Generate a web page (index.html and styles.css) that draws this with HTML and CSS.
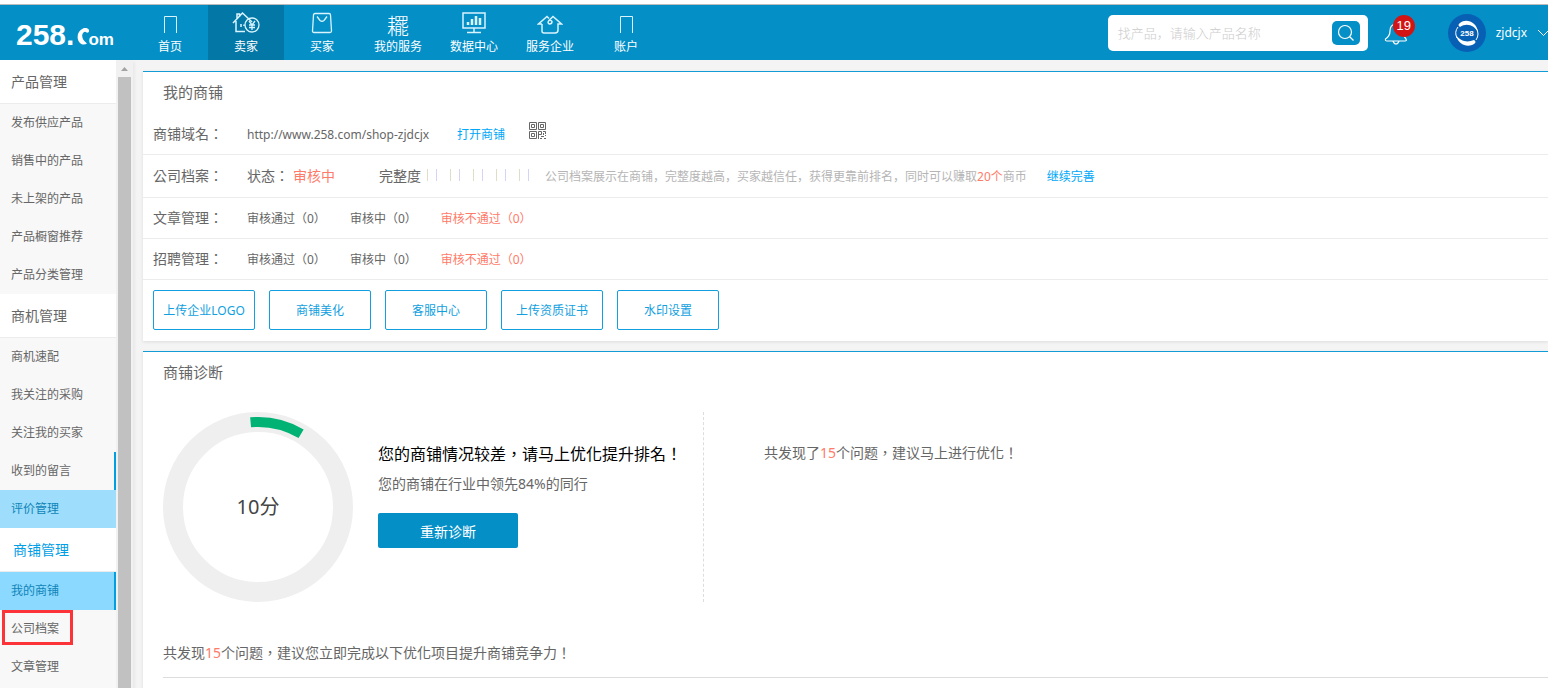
FILE: index.html
```html
<!DOCTYPE html>
<html lang="zh-CN">
<head>
  <meta charset="utf-8">
  <title>我的商铺</title>
  <link rel="stylesheet" href="styles.css">
</head>
<body>
  <header class="header">
    <a class="logo" href="#">
      <span class="logo-num">258.</span>
      <svg class="logo-c" width="13" height="17" viewBox="0 0 13 17">
        <path d="M6 0.500C8 -0.500 11 0 12 2C12.500 4 11 5 9.500 4.500C8.500 3.500 7.500 3.500 6.500 4.500C4 7 5 12 10 15.500C8 17 5 17 3 15C-1 11 0 3 6 0.500Z" fill="#fff"/>
      </svg>
      <span class="logo-om">om</span>
    </a>

    <nav class="nav">
      <a class="nav-item" href="#">
        <svg class="nav-icon" width="26" height="26" viewBox="0 0 26 26"><path d="M7.500 22V5.500H19.500V22"/></svg>
        <span>首页</span>
      </a>
      <a class="nav-item active" href="#">
        <svg class="nav-icon" width="28" height="26" viewBox="0 0 28 26">
          <path d="M1 12L10.500 2L20 11M4 10V20.500H13M5 8V3H7.500V6M9 13V16M12 13.500V15" stroke-width="1.500"/>
          <circle cx="20" cy="14" r="7" stroke-width="1.300"/>
          <path d="M17 10L20 14L23 10M20 14V19M17 14H23M17 16.500H23" stroke-width="1.300"/>
        </svg>
        <span>卖家</span>
      </a>
      <a class="nav-item" href="#">
        <svg class="nav-icon" width="26" height="26" viewBox="0 0 26 26">
          <path d="M6 2.500H20Q21.500 2.500 21.500 4L22.500 20Q22.500 21.500 21 21.500H5Q3.500 21.500 3.500 20L4.500 4Q4.500 2.500 6 2.500ZM8 5.500L11 9.500Q13 11 15 9.500L18 5.500" stroke-width="1.300"/>
        </svg>
        <span>买家</span>
      </a>
      <a class="nav-item" href="#">
        <span class="nav-glyph">䎱</span>
        <span>我的服务</span>
      </a>
      <a class="nav-item" href="#">
        <svg class="nav-icon" width="26" height="26" viewBox="0 0 26 26">
          <path d="M2 2H24V17H2ZM13 17V21M6 21.500H20" stroke-width="1.500"/>
          <path d="M7 14V11M11 14V8M15 14V5M19 14V7" stroke-width="2.500"/>
        </svg>
        <span>数据中心</span>
      </a>
      <a class="nav-item" href="#">
        <svg class="nav-icon" width="26" height="26" viewBox="0 0 26 26">
          <path d="M5 13H1.500L10 5.500L12 7.500M5 13V20Q5 22 7 22H18Q21 22 21 19V13H24.500L16 5.500L12 9.500Q10 12 12.500 13Q15 13 15 10.500L13 8.500" stroke-width="1.500"/>
        </svg>
        <span>服务企业</span>
      </a>
      <a class="nav-item" href="#">
        <svg class="nav-icon" width="26" height="26" viewBox="0 0 26 26"><path d="M7.500 22V5.500H19.500V22"/></svg>
        <span>账户</span>
      </a>
    </nav>

    <form class="search">
      <input class="search-input" type="text" aria-label="找产品" placeholder="找产品，请输入产品名称">
      <button class="search-button" type="button" aria-label="搜索">
        <svg width="18" height="18" viewBox="0 0 18 18" fill="none" stroke="#fff" stroke-width="1.200">
          <circle cx="8" cy="8" r="6.500"/><path d="M12.500 12.500L16.500 16.500"/>
        </svg>
      </button>
    </form>

    <a class="bell" href="#" aria-label="消息">
      <svg width="24" height="24" viewBox="0 0 24 24" fill="none" stroke="#fff" stroke-width="1.200">
        <path d="M11 3Q6 4 6 10Q6 15 1.500 18Q1 20 3 20H21Q23 20 22 18Q19 15 18 10Q18 4 13 3M9 20Q10 23 12 23T15 20"/>
      </svg>
      <span class="badge">19</span>
    </a>

    <a class="user" href="#">
      <svg width="38" height="38" viewBox="0 0 38 38">
        <circle cx="19" cy="19" r="19" fill="#0860b4"/>
        <path d="M12 9C18 4 29 8 30 18C27 12 19 8 12 13C10 12 10 10 12 9Z" fill="#fff"/>
        <path d="M26 30C20 34 10 31 8 21C12 27 19 29 26 26C28 27 28 29 26 30Z" fill="#fff"/>
        <path d="M10 13Q6 18 9 24M28 14Q32 20 28 26" fill="none" stroke="#fff"/>
        <text class="avatar-text" x="19" y="22" text-anchor="middle">258</text>
      </svg>
      <span class="user-name">zjdcjx</span>
      <svg class="chevron" width="11" height="10" viewBox="0 0 11 10" fill="none" stroke="#fff"><path d="M1 2L6.500 7.500L12 2"/></svg>
    </a>
  </header>

  <div class="page">
    <aside class="sidebar">
      <h2 class="menu-title">产品管理</h2>
      <ul class="menu">
        <li><a href="#">发布供应产品</a></li>
        <li><a href="#">销售中的产品</a></li>
        <li><a href="#">未上架的产品</a></li>
        <li><a href="#">产品橱窗推荐</a></li>
        <li><a href="#">产品分类管理</a></li>
      </ul>
      <h2 class="menu-title">商机管理</h2>
      <ul class="menu">
        <li><a href="#">商机速配</a></li>
        <li><a href="#">我关注的采购</a></li>
        <li><a href="#">关注我的买家</a></li>
        <li><a class="marked" href="#">收到的留言</a></li>
        <li><a class="hover" href="#">评价管理</a></li>
      </ul>
      <h2 class="menu-title current">商铺管理</h2>
      <ul class="menu">
        <li><a class="marked selected" href="#">我的商铺</a></li>
        <li class="framed"><a href="#">公司档案</a></li>
        <li><a href="#">文章管理</a></li>
      </ul>
    </aside>
    <div class="scrollbar">
      <svg width="13" height="17" viewBox="0 0 13 17"><path d="M3 11H10L6.500 7Z" fill="#a3a3a3"/></svg>
      <div class="thumb"></div>
    </div>

    <main class="main">
      <section class="panel">
        <h1 class="panel-title">我的商铺</h1>
        <div class="row">
          <span class="label">商铺域名：</span>
          <span class="domain">http://www.258.com/shop-zjdcjx</span>
          <a class="link" href="#">打开商铺</a>
          <svg class="qr" width="17" height="17" viewBox="0 0 17 17" fill="none" stroke="#666">
            <path d="M.500 .500H7.500V7.500H.500ZM9.500 .500H16.500V7.500H9.500ZM.500 9.500H7.500V16.500H.500ZM2.500 2.500H5.500V5.500H2.500ZM11.500 2.500H14.500V5.500H11.500ZM2.500 11.500H5.500V14.500H2.500ZM9.500 17V9.500H12.500V12.500H10M14 9.500H16.500V12M16.500 13V14M12 14.500H15M11 16.500H13M15 16.500H17M14.500 11V13"/>
          </svg>
        </div>
        <div class="row row-tall">
          <span class="label">公司档案：</span>
          <span class="status"><span class="label-text">状态：</span><span class="warn">审核中</span></span>
          <span class="complete">完整度</span>
          <span class="stars"><i></i><i></i><i></i><i></i><i></i></span>
          <span class="tip">公司档案展示在商铺，完整度越高，买家越信任，获得更靠前排名，同时可以赚取<span class="warn">20个</span>商币</span>
          <a class="link" href="#">继续完善</a>
        </div>
        <div class="row">
          <span class="label">文章管理：</span>
          <span class="counts"><a href="#">审核通过（0）</a><a href="#">审核中（0）</a><a class="warn" href="#">审核不通过（0）</a></span>
        </div>
        <div class="row">
          <span class="label">招聘管理：</span>
          <span class="counts"><a href="#">审核通过（0）</a><a href="#">审核中（0）</a><a class="warn" href="#">审核不通过（0）</a></span>
        </div>
        <div class="actions">
          <button type="button">上传企业LOGO</button>
          <button type="button">商铺美化</button>
          <button type="button">客服中心</button>
          <button type="button">上传资质证书</button>
          <button type="button">水印设置</button>
        </div>
      </section>

      <section class="panel diagnosis-panel">
        <h1 class="panel-title">商铺诊断</h1>
        <div class="diagnosis">
          <svg class="gauge" width="190" height="190" viewBox="0 0 190 190">
            <circle cx="95" cy="95" r="85" fill="none" stroke="#efefef" stroke-width="20"/>
            <path d="M87.600 10.300A85 85 0 0 1 138.100 21.700" fill="none" stroke="#00b274" stroke-width="10"/>
            <text class="gauge-text" x="95" y="102" text-anchor="middle">10分</text>
          </svg>
          <div class="result">
            <p class="result-title">您的商铺情况较差，请马上优化提升排名！</p>
            <p class="result-text">您的商铺在行业中领先84%的同行</p>
            <button class="retry" type="button">重新诊断</button>
          </div>
          <p class="problems">共发现了<span class="warn">15</span>个问题，建议马上进行优化！</p>
        </div>
        <p class="summary">共发现<span class="warn">15</span>个问题，建议您立即完成以下优化项目提升商铺竞争力！</p>
      </section>
    </main>
  </div>
</body>
</html>
```
FILE: styles.css
```css
* {
  box-sizing: border-box;
}

body {
  margin: 0;
  height: 100vh;
  display: flex;
  flex-direction: column;
  overflow: hidden;
  background: #f4f4f4;
  color: #666;
  font: 14px/20px "Noto Sans", "Noto Sans CJK SC", sans-serif;
}

h1, h2, p, ul {
  margin: 0;
  padding: 0;
  font-weight: normal;
}

ul {
  list-style: none;
}

a {
  color: inherit;
  text-decoration: none;
}

button, input {
  font-family: inherit;
}

/* header */
.header {
  flex: none;
  height: 60px;
  padding-top: 1px;
  display: flex;
  align-items: center;
  border-top: 4px solid #fff;
  box-shadow: inset 0 1px #bbb;
  background: #048fc7;
  color: #fff;
}

.logo {
  width: 132px;
  flex: none;
  padding: 4px 0 0 16px;
  display: flex;
  align-items: baseline;
  font-family: "Liberation Sans", sans-serif;
  font-weight: bold;
}

.logo-num {
  font-size: 30px;
  line-height: 32px;
}

.logo-c {
  margin-left: 3px;
}

.logo-om {
  margin-left: -2px;
  font-size: 17px;
}

.nav {
  display: flex;
  align-self: stretch;
}

.nav-item {
  width: 76px;
  padding-top: 6px;
  display: flex;
  flex-direction: column;
  align-items: center;
  font-size: 12px;
  line-height: 20px;
}

.nav-item.active {
  background: #0378a7;
}

.nav-icon {
  height: 26px;
  fill: none;
  stroke: #d9f4ff;
}

.nav-glyph {
  font-family: "Noto Sans CJK SC", sans-serif;
  font-size: 22px;
  font-weight: 300;
  line-height: 26px;
}

.search {
  width: 260px;
  height: 36px;
  margin-left: auto;
  padding: 0 8px 0 10px;
  display: flex;
  align-items: center;
  border-radius: 5px;
  background: #fff;
}

.search-input {
  flex: 1;
  min-width: 0;
  padding: 0;
  border: 0;
  outline: 0;
  font-size: 13px;
}

.search-input::placeholder {
  color: #ccc;
  font-weight: 300;
}

.search-button {
  width: 28px;
  height: 24px;
  padding: 0;
  display: flex;
  align-items: center;
  justify-content: center;
  border: 0;
  border-radius: 5px;
  background: #048fc7;
}

.bell {
  position: relative;
  height: 24px;
  margin-left: 16px;
}

.badge {
  position: absolute;
  left: 9px;
  top: -6px;
  width: 22px;
  height: 22px;
  border-radius: 50%;
  background: #d31414;
  font: 13px/22px "Liberation Sans", sans-serif;
  text-align: center;
}

.user {
  margin-left: 40px;
  display: flex;
  align-items: center;
}

.avatar-text {
  fill: #fff;
  font: bold 8px "Liberation Sans", sans-serif;
}

.user-name {
  margin: 0 10px;
  font-size: 12px;
}

/* left menu */
.page {
  flex: 1;
  min-height: 0;
  display: flex;
}

.sidebar {
  flex: none;
  width: 116px;
  overflow: hidden;
  background: #f8f8f8;
}

.menu-title {
  height: 44px;
  padding-left: 11px;
  border-bottom: 1px solid #ececec;
  background: #fff;
  font-size: 14px;
  line-height: 44px;
}

.menu-title.current {
  padding-left: 13px;
  color: #009ee7;
}

.menu a {
  display: block;
  height: 38px;
  padding-left: 11px;
  font-size: 12px;
  line-height: 38px;
}

.menu .marked {
  border-right: 2px solid #009fe0;
}

.menu .hover {
  background: #9edefc;
  color: #0f84b8;
}

.menu .selected {
  background: #8cd9ff;
  color: #0f84b8;
}

.framed {
  position: relative;
}

.framed::after {
  content: "";
  box-sizing: border-box;
  position: absolute;
  left: 2px;
  top: 0;
  width: 71px;
  height: 35px;
  border: 3px solid #fc3338;
}

.scrollbar {
  flex: none;
  width: 17px;
  padding: 0 2px;
  display: flex;
  flex-direction: column;
  background: #f1f1f1;
  box-shadow: 2px 2px 2px #eaeaea;
}

.thumb {
  flex: 1;
  background: #c1c1c1;
}

/* content */
.main {
  flex: 1;
  min-width: 0;
  padding: 11px 0 0 10px;
  overflow: hidden;
}

.panel {
  margin-bottom: 10px;
  border-top: 1px solid #119bd7;
  background: #fff;
  box-shadow: 0 1px 3px #ddd;
}

.panel-title {
  height: 42px;
  padding-left: 20px;
  font-size: 15px;
  line-height: 40px;
}

.row {
  height: 41px;
  padding-left: 10px;
  display: flex;
  align-items: baseline;
  border-bottom: 1px solid #ececec;
  line-height: 40px;
  white-space: nowrap;
}

.row-tall {
  height: 43px;
  line-height: 42px;
}

.label {
  flex: none;
  width: 94px;
}

/* punctuation sits in the middle of its box */
.label, .label-text, .result-title, .problems, .summary {
  font-family: "Noto Sans", "Noto Sans CJK TC", sans-serif;
  font-feature-settings: "locl" 0;
}

.domain {
  width: 210px;
  font-size: 12px;
}

.link {
  font-size: 12px;
  color: #00a8f8;
}

.qr {
  margin-left: 24px;
}

.warn {
  color: #ff7b69;
}

.status {
  width: 132px;
}

.label-text {
  margin-right: 4px;
}

.complete {
  margin-right: 6px;
}

.stars {
  display: flex;
  gap: 13px;
}

.stars i {
  width: 10px;
  height: 12px;
  border-left: 1px solid #dedec8;
  border-right: 1px solid #d4d4f4;
}

.tip {
  margin: 0 20px 0 16px;
  font-size: 12px;
  color: #b5b5b5;
}

.counts {
  display: flex;
  gap: 24px;
  font-size: 12px;
}

.actions {
  padding: 10px 10px 11px;
  display: flex;
  gap: 14px;
}

.actions button {
  width: 102px;
  height: 40px;
  padding: 0;
  border: 1px solid #119fdf;
  border-radius: 2px;
  background: #fff;
  color: #119fdf;
  font-size: 12px;
}

.diagnosis-panel {
  padding-bottom: 20px;
}

.diagnosis {
  padding: 18px 0 0 20px;
  display: flex;
}

.gauge {
  flex: none;
}

.gauge-text {
  fill: #444;
  font-size: 20px;
}

.result {
  width: 351px;
  padding: 30px 0 0 25px;
  border-right: 1px dashed #ddd;
  white-space: nowrap;
}

.result-title {
  color: #000;
  font-size: 16px;
  line-height: 24px;
}

.result-text {
  margin: 8px 0 19px;
}

.retry {
  width: 140px;
  height: 35px;
  border: 0;
  border-radius: 2px;
  background: #048fc7;
  color: #fff;
  font-size: 14px;
}

.problems {
  padding: 31px 0 0 60px;
}

.summary {
  margin: 26px 0 0 20px;
  padding: 15px 0 14px;
  border-bottom: 1px solid #ddd;
}
```
